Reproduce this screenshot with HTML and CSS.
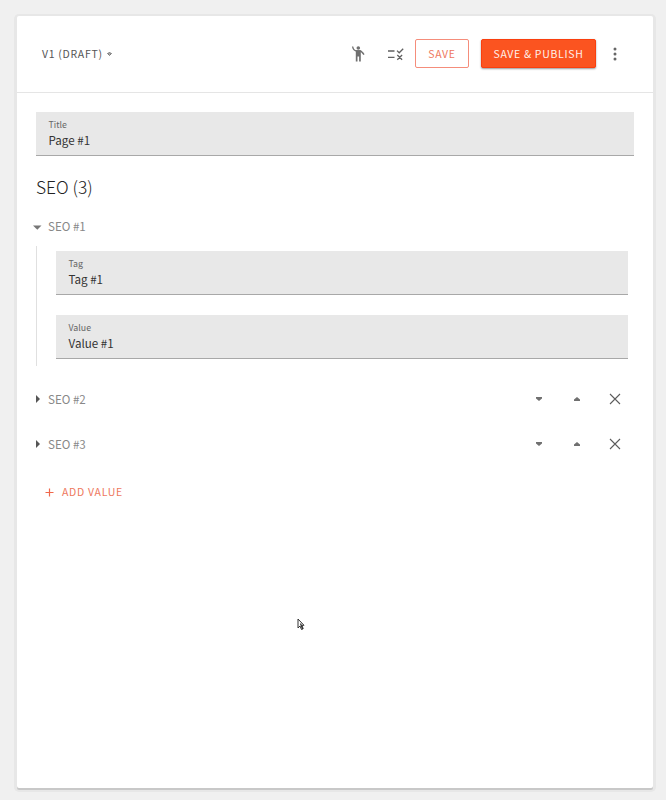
FILE: index.html
```html
<!DOCTYPE html>
<html lang="en">
<head>
<meta charset="utf-8">
<title>Page editor</title>
<link rel="stylesheet" href="styles.css">
</head>
<body>
<main class="card">
  <header class="header">
    <button class="version"><span>V1 (DRAFT)</span><svg width="5" height="4" viewBox="0 0 5 4"><path d="M.5 1.5 2.5.5l2 1-2 2z" fill="#aaa" stroke="#555" stroke-width=".7"/></svg></button>
    <div class="actions">
      <svg class="person" width="16" height="18" viewBox="0 0 16 18"><circle cx="7.3" cy="3" r="1.8" fill="#707070"/><path d="M1.6 1.5C2 4 3.3 5.6 5.5 6h3.7c1.5.2 2.4 1.5 3.8 3.7M7.3 6v5" fill="none" stroke="#707070" stroke-width="1.4"/><path d="M4.8 5.3h5v11.2H8.1v-5H6.5v5H4.8z" fill="#707070"/></svg>
      <svg class="rules" width="18" height="14" viewBox="0 0 18 14" fill="none" stroke="#606060" stroke-width="1.3"><path d="M1 4h6.5M1 10.3h6.5M10 3.6l2.2 2.2 4-4M10.3 8l4.8 4.7M15.1 8l-4.8 4.7"/></svg>
      <button class="button outlined"><span>SAVE</span></button>
      <button class="button filled"><span>SAVE &amp; PUBLISH</span></button>
      <svg class="more" width="4" height="14" viewBox="0 0 4 14" fill="#666"><circle cx="2" cy="2" r="1.5"/><circle cx="2" cy="7" r="1.5"/><circle cx="2" cy="12" r="1.5"/></svg>
    </div>
  </header>
  <section class="form">
    <div class="field"><label>Title</label><div class="value">Page #1</div></div>
    <h2>SEO (3)</h2>
    <div class="row open">
      <svg class="caret" width="9" height="5" viewBox="0 0 9 5"><path d="M0 .5h8.5L4.3 4.8z" fill="#777"/></svg>
      <span class="name">SEO #1</span>
    </div>
    <div class="group">
      <div class="field"><label>Tag</label><div class="value">Tag #1</div></div>
      <div class="field"><label>Value</label><div class="value">Value #1</div></div>
    </div>
    <div class="row">
      <svg class="caret" width="9" height="8" viewBox="0 0 9 8"><path d="M2 0l4 4-4 4z" fill="#555"/></svg>
      <span class="name">SEO #2</span>
      <div class="tools">
        <svg width="6" height="4" viewBox="0 0 6 4"><path d="M0 0h6v1.5L3 4 0 1.5z" fill="#707070"/></svg>
        <svg width="6" height="4" viewBox="0 0 6 4"><path d="M0 4h6V2.5L3 0 0 2.5z" fill="#707070"/></svg>
        <svg class="close" width="12" height="12" viewBox="0 0 12 12"><path d="M1 1l10 10M11 1 1 11" stroke="#5c5c5c" stroke-width="1.1"/></svg>
      </div>
    </div>
    <div class="row">
      <svg class="caret" width="9" height="8" viewBox="0 0 9 8"><path d="M2 0l4 4-4 4z" fill="#555"/></svg>
      <span class="name">SEO #3</span>
      <div class="tools">
        <svg width="6" height="4" viewBox="0 0 6 4"><path d="M0 0h6v1.5L3 4 0 1.5z" fill="#707070"/></svg>
        <svg width="6" height="4" viewBox="0 0 6 4"><path d="M0 4h6V2.5L3 0 0 2.5z" fill="#707070"/></svg>
        <svg class="close" width="12" height="12" viewBox="0 0 12 12"><path d="M1 1l10 10M11 1 1 11" stroke="#5c5c5c" stroke-width="1.1"/></svg>
      </div>
    </div>
    <button class="add"><svg width="9" height="9" viewBox="0 0 9 9"><path d="M4.5.5v8M.5 4.5h8" stroke="#f0674b" stroke-width="1.2"/></svg><span>ADD VALUE</span></button>
  </section>
</main>
<svg class="cursor" width="8" height="13" viewBox="0 0 8 13"><path d="M1 1v9l2-2 1.5 3.5 1.7-.8L4.8 7.3H7z" fill="#fff" stroke="#333" stroke-width="1"/><path d="M3.5 5.5 5.6 11" stroke="#333" stroke-width="1.3"/></svg>
</body>
</html>
```
FILE: styles.css
```css
* { box-sizing: border-box; }
body {
  margin: 0;
  height: 800px;
  padding: 16px 13px 12px 17px;
  overflow: hidden;
  background: #f0f0f0;
  font-family: "Noto Sans CJK SC", "Noto Sans", sans-serif;
  color: #444;
}
svg { display: block; flex: none; }
button {
  padding: 0;
  border: 0;
  background: none;
  font: inherit;
  color: inherit;
}
.card {
  height: 772px;
  background: #fff;
  border-radius: 2px;
  box-shadow: 0 2px 0 0 #c8c8c8, 0 1px 0 3px #e7e7e7;
}
.header {
  display: flex;
  align-items: center;
  justify-content: space-between;
  height: 77px;
  padding: 0 36px 0 25px;
  border-bottom: 1px solid #e5e5e5;
}
.version {
  display: flex;
  align-items: center;
  gap: 4px;
  font-size: 10.5px;
  line-height: 16px;
  letter-spacing: .7px;
  color: #555;
}
.actions { display: flex; align-items: center; margin-top: -1px; }
.rules { margin: 0 10px 0 20px; }
.button {
  height: 29px;
  border-radius: 2px;
  font-size: 10.5px;
  line-height: 16px;
  letter-spacing: .7px;
  white-space: nowrap;
}
.outlined {
  width: 54px;
  border: 1px solid #f58d7b;
  color: #ee7860;
}
.filled {
  width: 115px;
  margin: 0 17px 0 12px;
  background: #fb5420;
  border: 1px solid #fa3f0e;
  color: #fff0ea;
  box-shadow: 0 1px 2px #999;
}
.form { padding: 19px 19px 0; }
.field {
  height: 44px;
  padding: 6px 13px 0 12.5px;
  background: #e8e8e8;
  border-bottom: 1px solid #a8a8a8;
}
.field label {
  display: block;
  font-size: 8.8px;
  line-height: 13px;
  color: #666;
}
.value {
  font-size: 11.6px;
  line-height: 18px;
  color: #333;
}
h2 {
  margin: 19px 0 0;
  font-size: 17.4px;
  line-height: 24px;
  font-weight: 300;
  color: #222;
}
.row {
  display: flex;
  align-items: center;
  height: 45px;
  color: #888;
}
.row.open { height: 20px; margin: 17px 0 10px -3px; }
.caret { margin-right: 4px; }
.row.open .caret { margin: 2px 6px 0 0; }
.row:not(.open) .caret { margin-left: -2px; margin-right: 5px; }
.name { font-size: 11.6px; line-height: 18px; }
.group {
  display: grid;
  gap: 19px;
  height: 120px;
  padding: 5px 6px 7px 19px;
  margin-bottom: 10px;
  border-left: 1px solid #e0e0e0;
}
.tools { display: flex; align-items: center; gap: 32px; margin: 0 13px 0 auto; }
.tools .close { margin-left: -3px; }
.add {
  display: flex;
  align-items: center;
  gap: 8px;
  margin: 18px 0 0 9px;
  font-size: 10.5px;
  line-height: 16px;
  letter-spacing: .7px;
  color: #ee7860;
}
.cursor { position: absolute; left: 297px; top: 618px; }
```
